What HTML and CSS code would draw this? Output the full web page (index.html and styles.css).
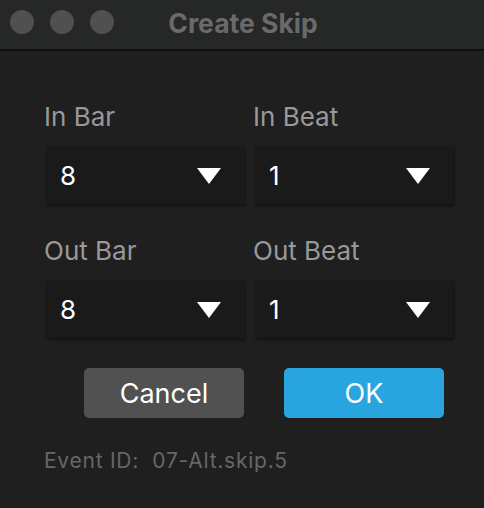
FILE: index.html
```html
<!DOCTYPE html>
<html>
<head>
<meta charset="utf-8">
<link rel="stylesheet" href="styles.css">
</head>
<body>
<div class="window">
  <div class="titlebar">
    <div class="lights">
      <span class="light"></span><span class="light"></span><span class="light"></span>
    </div>
    <div class="title">Create Skip</div>
  </div>
  <div class="content">
    <div class="grid">
      <div class="field">
        <div class="label">In Bar</div>
        <div class="select"><span class="value">8</span><span class="arrow"></span></div>
      </div>
      <div class="field">
        <div class="label">In Beat</div>
        <div class="select"><span class="value">1</span><span class="arrow"></span></div>
      </div>
      <div class="field">
        <div class="label">Out Bar</div>
        <div class="select"><span class="value">8</span><span class="arrow"></span></div>
      </div>
      <div class="field">
        <div class="label">Out Beat</div>
        <div class="select"><span class="value">1</span><span class="arrow"></span></div>
      </div>
    </div>
    <div class="buttons">
      <button class="btn cancel">Cancel</button>
      <button class="btn ok">OK</button>
    </div>
    <div class="event">Event ID:&nbsp; 07-Alt.skip.5</div>
  </div>
</div>
</body>
</html>
```

FILE: styles.css
```css
html, body {
  margin: 0;
  padding: 0;
  background: #1f1f1f;
  font-family: Inter, "Noto Sans", sans-serif;
}
.window {
  width: 484px;
  height: 508px;
  background: #1f1f1f;
  overflow: hidden;
}
.titlebar {
  height: 49px;
  background: #262727;
  border-bottom: 2px solid #0f0f0f;
  position: relative;
  display: flex;
  align-items: center;
  justify-content: center;
}
.lights {
  position: absolute;
  left: 10px;
  top: 10px;
  display: flex;
  gap: 16px;
}
.light {
  width: 24px;
  height: 24px;
  border-radius: 50%;
  background: #4f504f;
}
.title {
  color: #6a6a6a;
  font-weight: 700;
  font-size: 26.5px;
  margin-top: -4px;
  margin-left: 2px;
}
.content {
  padding: 51px 0 0 44px;
}
.grid {
  display: grid;
  grid-template-columns: 200px 200px;
  column-gap: 9px;
  row-gap: 32px;
}
.label {
  color: #999999;
  font-size: 26px;
  line-height: 30px;
  margin-bottom: 14px;
}
.select {
  height: 58px;
  background: #1a1a1a;
  box-shadow: 1px 2px 3px rgba(0, 0, 0, 0.45);
  display: flex;
  align-items: center;
  justify-content: space-between;
  padding: 0 23px 0 14px;
  margin-left: 2px;
}
.value {
  color: #ffffff;
  font-size: 26px;
}
.arrow {
  width: 0;
  height: 0;
  border-left: 12px solid transparent;
  border-right: 12px solid transparent;
  border-top: 16px solid #ffffff;
  margin-top: 2px;
}
.buttons {
  display: flex;
  gap: 40px;
  margin: 30px 0 0 40px;
}
.btn {
  width: 160px;
  height: 50px;
  border: none;
  border-radius: 5px;
  color: #ffffff;
  font-family: Inter, "Noto Sans", sans-serif;
  font-size: 27px;
  padding: 0;
}
.cancel {
  background: #515151;
}
.ok {
  background: #28a4de;
}
.event {
  color: #676767;
  font-size: 21px;
  letter-spacing: 0.75px;
  line-height: 24px;
  margin-top: 31px;
}
```
